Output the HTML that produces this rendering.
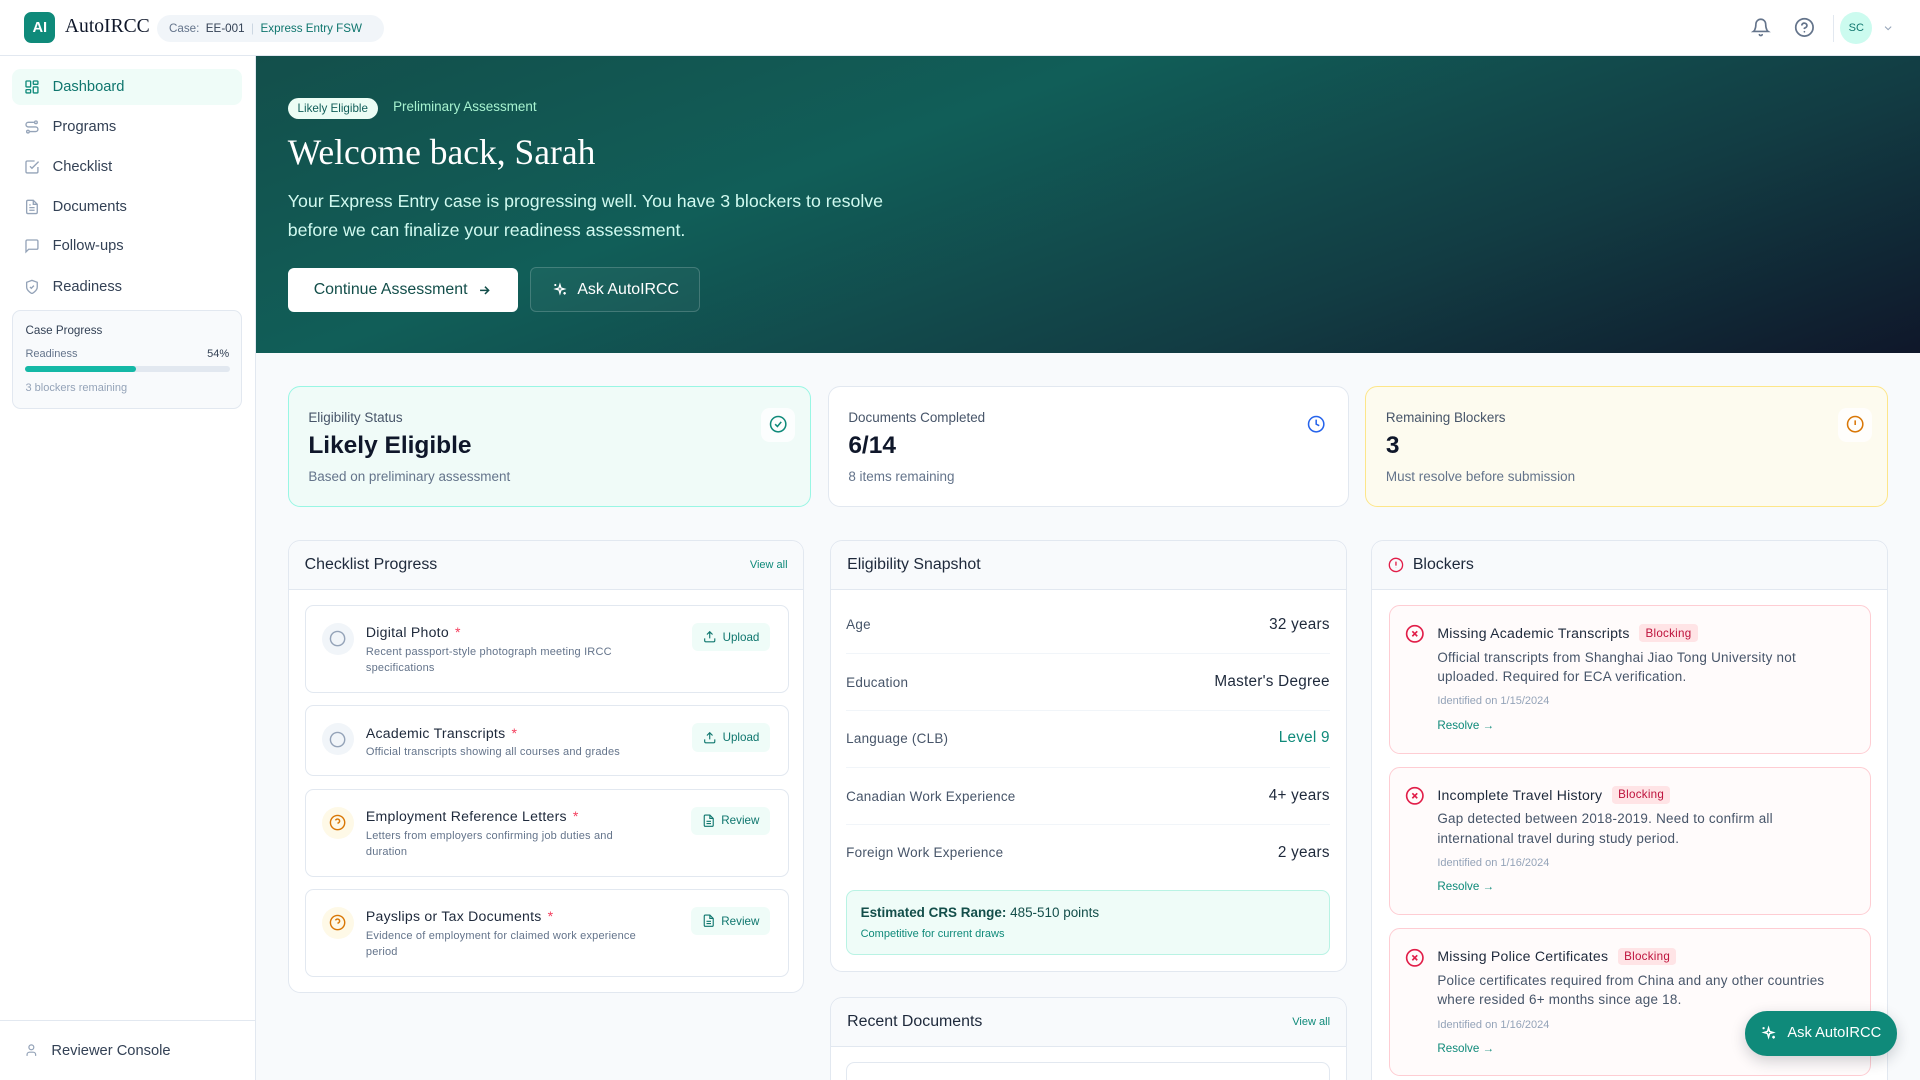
<!DOCTYPE html>
<html><head><meta charset="utf-8">
<style>
html{zoom:1.2245;overflow:hidden;height:882px;width:1568px}
*{box-sizing:border-box;margin:0;padding:0}
body{width:1568px;height:882px;overflow:hidden;position:relative;background:#f8fafc;font-family:"Liberation Sans",sans-serif;color:#0f172a}
.a{position:absolute}
svg{display:block}
.hdr{left:0;top:0;width:1568px;height:46px;background:#fff;border-bottom:1px solid #e2e8f0}
.side{left:0;top:46px;width:209px;height:836px;background:#fff;border-right:1px solid #e2e8f0}
.nav{left:10px;width:188px;height:30px;display:flex;align-items:center;padding-left:10px;font-size:12px;color:#334155;border-radius:7px}
.nav svg{margin-right:10px}
.card{border:1px solid #e2e8f0;border-radius:10px;background:#fff}
.ph{height:40px;border-bottom:1px solid #e2e8f0;background:#f8fafc;border-radius:10px 10px 0 0;display:flex;align-items:center;justify-content:space-between;padding:0 13px;font-size:13px;color:#1e293b}
.ph span{font-size:9px;color:#0f8a7a}
.ci{left:249px;width:395px;border:1px solid #e2e8f0;border-radius:7px;background:#fff}
.ci .ic{position:absolute;left:13px;top:14px;width:26px;height:26px;border-radius:50%;display:flex;align-items:center;justify-content:center}
.ci .t{position:absolute;left:49px;top:15px;font-size:11.5px;color:#1e293b;letter-spacing:.2px}
.ci .t b{color:#f43f5e;font-weight:normal;margin-left:5px}
.ci .d{position:absolute;left:49px;top:32px;width:232px;font-size:9px;line-height:13px;color:#64748b;letter-spacing:.15px}
.ci .btn{position:absolute;right:14px;top:14px;height:23px;padding:0 9px;border-radius:5px;background:#effcf8;color:#0f766e;font-size:9.5px;display:flex;align-items:center;gap:5px}
.row{left:691px;width:395px;height:47px;display:flex;justify-content:space-between;align-items:center;font-size:11px;color:#475569;border-bottom:1px solid #f1f5f9;letter-spacing:.2px}
.row b{font-weight:normal;font-size:12.5px;color:#1e293b}
.bl{left:1134px;width:394px;border:1px solid #fecdd3;background:#fffbfb;border-radius:9px}
.bl .x{position:absolute;left:13px;top:15px}
.bl .t{position:absolute;left:39px;top:15px;font-size:11.5px;color:#1e293b;display:flex;align-items:center;gap:8px;letter-spacing:.2px}
.bl .t i{font-style:normal;font-size:9.5px;color:#be123c;background:#ffe4e6;padding:2px 5px;border-radius:3px}
.bl .d{position:absolute;left:39px;top:34px;width:300px;font-size:11px;line-height:16px;color:#475569;letter-spacing:.2px}
.bl .dt{position:absolute;left:39px;top:73px;font-size:9px;color:#94a3b8}
.bl .r{position:absolute;left:39px;top:92px;font-size:9.5px;color:#0f8a7a}
.stat{top:315px;height:99px;border-radius:10px;border:1px solid #e2e8f0;background:#fff}
.stat .l{position:absolute;left:16px;top:19px;font-size:11px;color:#475569}
.stat .v{position:absolute;left:16px;top:37px;font-size:20px;color:#0f172a;font-weight:bold}
.stat .s{position:absolute;left:16px;top:67px;font-size:11px;color:#64748b}
.stat .ib{position:absolute;right:12px;top:17px;width:28px;height:28px;border-radius:7px;background:rgba(255,255,255,.8);display:flex;align-items:center;justify-content:center}
</style></head><body>

<div class="a hdr"></div>
<div class="a" style="left:20px;top:10px;width:25px;height:25px;border-radius:6px;background:#0f8a7a;color:#fff;font-size:12px;font-weight:bold;display:flex;align-items:center;justify-content:center">AI</div>
<div class="a" style="left:53px;top:13px;font-family:'Liberation Serif',serif;font-size:16px;color:#0f172a">AutoIRCC</div>
<div class="a" style="left:128px;top:12px;width:186px;height:22px;border-radius:11px;background:#f1f5f9;font-size:9.5px;display:flex;align-items:center;padding-left:10px;color:#64748b;white-space:nowrap">Case:&nbsp;<span style="color:#334155">&nbsp;EE-001&nbsp;</span>&nbsp;<span style="color:#cbd5e1">|</span>&nbsp;&nbsp;<span style="color:#0f766e">Express Entry FSW</span></div>
<svg class="a" style="left:1430px;top:14px" width="16" height="17" viewBox="0 0 24 24" fill="none" stroke="#64748b" stroke-width="2" stroke-linecap="round"><path d="M6 8a6 6 0 0112 0c0 7 3 9 3 9H3s3-2 3-9M10.3 21a1.9 1.9 0 003.4 0"/></svg>
<svg class="a" style="left:1465px;top:14px" width="17" height="17" viewBox="0 0 24 24" fill="none" stroke="#64748b" stroke-width="2" stroke-linecap="round"><circle cx="12" cy="12" r="10"/><path d="M9.1 9a3 3 0 015.8 1c0 2-3 3-3 3M12 17h.01"/></svg>
<div class="a" style="left:1497px;top:12px;width:1px;height:22px;background:#e2e8f0"></div>
<div class="a" style="left:1503px;top:10px;width:26px;height:26px;border-radius:50%;background:#ccfbef;color:#0f766e;font-size:9px;display:flex;align-items:center;justify-content:center">SC</div>
<svg class="a" style="left:1537px;top:18px" width="10" height="10" viewBox="0 0 24 24" fill="none" stroke="#94a3b8" stroke-width="2"><path d="M6 9l6 6 6-6"/></svg>

<div class="a side"></div>
<div class="a nav" style="top:56px;background:#effcf8;color:#0f766e"><svg width="13" height="13" viewBox="0 0 24 24" fill="none" stroke="#0f8a7a" stroke-width="2"><rect x="3" y="3" width="7" height="9" rx="1"/><rect x="14" y="3" width="7" height="5" rx="1"/><rect x="14" y="12" width="7" height="9" rx="1"/><rect x="3" y="16" width="7" height="5" rx="1"/></svg>Dashboard</div>
<div class="a nav" style="top:89px"><svg width="13" height="13" viewBox="0 0 24 24" fill="none" stroke="#94a3b8" stroke-width="2"><circle cx="6" cy="19" r="2"/><circle cx="18" cy="5" r="2"/><path d="M9 19h8.5a3.5 3.5 0 000-7h-11a3.5 3.5 0 010-7H15"/></svg>Programs</div>
<div class="a nav" style="top:121px"><svg width="13" height="13" viewBox="0 0 24 24" fill="none" stroke="#94a3b8" stroke-width="2"><path d="M9 11l3 3L22 4"/><path d="M21 12v7a2 2 0 01-2 2H5a2 2 0 01-2-2V5a2 2 0 012-2h11"/></svg>Checklist</div>
<div class="a nav" style="top:154px"><svg width="13" height="13" viewBox="0 0 24 24" fill="none" stroke="#94a3b8" stroke-width="2"><path d="M14 2H6a2 2 0 00-2 2v16a2 2 0 002 2h12a2 2 0 002-2V8z"/><path d="M14 2v6h6M16 13H8M16 17H8M10 9H8"/></svg>Documents</div>
<div class="a nav" style="top:186px"><svg width="13" height="13" viewBox="0 0 24 24" fill="none" stroke="#94a3b8" stroke-width="2"><path d="M21 15a2 2 0 01-2 2H7l-4 4V5a2 2 0 012-2h14a2 2 0 012 2z"/></svg>Follow-ups</div>
<div class="a nav" style="top:219px"><svg width="13" height="13" viewBox="0 0 24 24" fill="none" stroke="#94a3b8" stroke-width="2"><path d="M12 22s8-4 8-10V5l-8-3-8 3v7c0 6 8 10 8 10z"/><path d="M9 12l2 2 4-4"/></svg>Readiness</div>
<div class="a" style="left:10px;top:253px;width:188px;height:81px;border:1px solid #e2e8f0;border-radius:7px;background:#f8fafc">
 <div class="a" style="left:10px;top:11px;font-size:9.5px;color:#334155">Case Progress</div>
 <div class="a" style="left:10px;top:30px;font-size:9px;color:#64748b">Readiness</div>
 <div class="a" style="right:10px;top:30px;font-size:9px;color:#334155">54%</div>
 <div class="a" style="left:10px;top:45px;width:167px;height:5px;border-radius:3px;background:#e2e8f0"><div style="width:54%;height:5px;border-radius:3px;background:#14b8a6"></div></div>
 <div class="a" style="left:10px;top:58px;font-size:9px;color:#94a3b8">3 blockers remaining</div>
</div>
<div class="a" style="left:0;top:833px;width:208px;height:1px;background:#e2e8f0"></div>
<div class="a nav" style="top:843px"><svg width="12" height="12" viewBox="0 0 24 24" fill="none" stroke="#94a3b8" stroke-width="2"><circle cx="12" cy="7" r="4"/><path d="M5 21v-2a4 4 0 014-4h6a4 4 0 014 4v2"/></svg>Reviewer Console</div>

<div class="a" style="left:209px;top:46px;width:1359px;height:242px;background:linear-gradient(160deg,#134f4b 0%,#115e58 35%,#123c43 70%,#0f172a 100%)"></div>
<div class="a" style="left:235px;top:80px;height:17px;padding:0 8px;border-radius:9px;background:#ecfdf5;color:#115e59;font-size:9.5px;display:flex;align-items:center">Likely Eligible</div>
<div class="a" style="left:321px;top:81px;font-size:11px;color:#a7f3d0">Preliminary Assessment</div>
<div class="a" style="left:235px;top:107px;font-family:'Liberation Serif',serif;font-size:29px;color:#fff">Welcome back, Sarah</div>
<div class="a" style="left:235px;top:153px;width:515px;font-size:14.5px;line-height:23px;color:#d1faf0">Your Express Entry case is progressing well. You have 3 blockers to resolve before we can finalize your readiness assessment.</div>
<div class="a" style="left:235px;top:219px;width:188px;height:36px;border-radius:5px;background:#fff;color:#134e4a;font-size:13px;display:flex;align-items:center;justify-content:center;gap:8px">Continue Assessment <svg width="12" height="12" viewBox="0 0 24 24" fill="none" stroke="#134e4a" stroke-width="2.5"><path d="M5 12h14M13 6l6 6-6 6"/></svg></div>
<div class="a" style="left:433px;top:218px;width:139px;height:37px;border-radius:5px;border:1px solid rgba(255,255,255,.18);background:rgba(255,255,255,.04);color:#fff;font-size:13px;display:flex;align-items:center;justify-content:center;gap:8px"><svg width="13" height="13" viewBox="0 0 24 24" fill="none" stroke="#fff" stroke-width="2"><path d="M12 4l1.5 5 5 1.5-5 1.5-1.5 5-1.5-5-5-1.5 5-1.5zM19 15v4M17 17h4M5 3v3M3.5 4.5h3"/></svg>Ask AutoIRCC</div>

<div class="a stat" style="left:235px;width:427px;background:#f0fbf8;border-color:#99f6e4"><div class="l">Eligibility Status</div><div class="v">Likely Eligible</div><div class="s">Based on preliminary assessment</div><div class="ib"><svg width="15" height="15" viewBox="0 0 24 24" fill="none" stroke="#0f8a7a" stroke-width="2"><circle cx="12" cy="12" r="10"/><path d="M8 12l3 3 5-6"/></svg></div></div>
<div class="a stat" style="left:676px;width:426px"><div class="l">Documents Completed</div><div class="v">6/14</div><div class="s">8 items remaining</div><div class="ib"><svg width="15" height="15" viewBox="0 0 24 24" fill="none" stroke="#2563eb" stroke-width="2"><circle cx="12" cy="12" r="10"/><path d="M12 6v6l4 2"/></svg></div></div>
<div class="a stat" style="left:1115px;width:427px;background:#fdfbef;border-color:#fde68a"><div class="l">Remaining Blockers</div><div class="v">3</div><div class="s">Must resolve before submission</div><div class="ib"><svg width="15" height="15" viewBox="0 0 24 24" fill="none" stroke="#d97706" stroke-width="2"><circle cx="12" cy="12" r="10"/><path d="M12 7v6M12 16.5v.01"/></svg></div></div>

<div class="a card" style="left:235px;top:441px;width:422px;height:370px"><div class="ph">Checklist Progress<span>View all</span></div></div>
<div class="a ci" style="top:494px;height:72px"><div class="ic" style="background:#f1f5f9"><svg width="14" height="14" viewBox="0 0 24 24" fill="none" stroke="#94a3b8" stroke-width="2"><circle cx="12" cy="12" r="10"/></svg></div><div class="t">Digital Photo<b>*</b></div><div class="d">Recent passport-style photograph meeting IRCC specifications</div><div class="btn"><svg width="11" height="11" viewBox="0 0 24 24" fill="none" stroke="#0f766e" stroke-width="2"><path d="M21 15v4a2 2 0 01-2 2H5a2 2 0 01-2-2v-4M17 8l-5-5-5 5M12 3v12"/></svg>Upload</div></div>
<div class="a ci" style="top:576px;height:58px"><div class="ic" style="background:#f1f5f9"><svg width="14" height="14" viewBox="0 0 24 24" fill="none" stroke="#94a3b8" stroke-width="2"><circle cx="12" cy="12" r="10"/></svg></div><div class="t">Academic Transcripts<b>*</b></div><div class="d" style="width:300px">Official transcripts showing all courses and grades</div><div class="btn"><svg width="11" height="11" viewBox="0 0 24 24" fill="none" stroke="#0f766e" stroke-width="2"><path d="M21 15v4a2 2 0 01-2 2H5a2 2 0 01-2-2v-4M17 8l-5-5-5 5M12 3v12"/></svg>Upload</div></div>
<div class="a ci" style="top:644px;height:72px"><div class="ic" style="background:#fef9e7"><svg width="14" height="14" viewBox="0 0 24 24" fill="none" stroke="#d97706" stroke-width="2"><circle cx="12" cy="12" r="10"/><path d="M9.1 9a3 3 0 015.8 1c0 2-3 3-3 3M12 17h.01"/></svg></div><div class="t">Employment Reference Letters<b>*</b></div><div class="d" style="width:215px">Letters from employers confirming job duties and duration</div><div class="btn"><svg width="11" height="11" viewBox="0 0 24 24" fill="none" stroke="#0f766e" stroke-width="2"><path d="M14 2H6a2 2 0 00-2 2v16a2 2 0 002 2h12a2 2 0 002-2V8z"/><path d="M14 2v6h6M16 13H8M16 17H8"/></svg>Review</div></div>
<div class="a ci" style="top:726px;height:72px"><div class="ic" style="background:#fef9e7"><svg width="14" height="14" viewBox="0 0 24 24" fill="none" stroke="#d97706" stroke-width="2"><circle cx="12" cy="12" r="10"/><path d="M9.1 9a3 3 0 015.8 1c0 2-3 3-3 3M12 17h.01"/></svg></div><div class="t">Payslips or Tax Documents<b>*</b></div><div class="d" style="width:225px">Evidence of employment for claimed work experience period</div><div class="btn"><svg width="11" height="11" viewBox="0 0 24 24" fill="none" stroke="#0f766e" stroke-width="2"><path d="M14 2H6a2 2 0 00-2 2v16a2 2 0 002 2h12a2 2 0 002-2V8z"/><path d="M14 2v6h6M16 13H8M16 17H8"/></svg>Review</div></div>

<div class="a card" style="left:678px;top:441px;width:422px;height:353px"><div class="ph">Eligibility Snapshot</div></div>
<div class="a row" style="top:487px">Age<b>32 years</b></div>
<div class="a row" style="top:534px">Education<b>Master's Degree</b></div>
<div class="a row" style="top:580px">Language (CLB)<b style="color:#0f8a7a">Level 9</b></div>
<div class="a row" style="top:627px">Canadian Work Experience<b>4+ years</b></div>
<div class="a row" style="top:673px;border:none">Foreign Work Experience<b>2 years</b></div>
<div class="a" style="left:691px;top:727px;width:395px;height:53px;border:1px solid #b9f3e4;border-radius:7px;background:#effcf8">
 <div class="a" style="left:11px;top:11px;font-size:11px;color:#134e4a"><b>Estimated CRS Range:</b> 485-510 points</div>
 <div class="a" style="left:11px;top:30px;font-size:9px;color:#0f8a7a">Competitive for current draws</div>
</div>
<div class="a card" style="left:678px;top:814px;width:422px;height:100px"><div class="ph" style="height:40px">Recent Documents<span>View all</span></div></div>
<div class="a" style="left:691px;top:867px;width:395px;height:40px;border:1px solid #e2e8f0;border-radius:7px;background:#fff"></div>

<div class="a card" style="left:1120px;top:441px;width:422px;height:460px"><div class="ph" style="justify-content:flex-start;gap:7px"><svg width="13" height="13" viewBox="0 0 24 24" fill="none" stroke="#e11d48" stroke-width="2"><circle cx="12" cy="12" r="10"/><path d="M12 7v6M12 16.5v.01"/></svg>Blockers</div></div>
<div class="a bl" style="top:494px;height:122px"><svg class="x" width="16" height="16" viewBox="0 0 24 24" fill="none" stroke="#e11d48" stroke-width="2"><circle cx="12" cy="12" r="10"/><path d="M15 9l-6 6M9 9l6 6"/></svg><div class="t">Missing Academic Transcripts<i>Blocking</i></div><div class="d" style="width:335px">Official transcripts from Shanghai Jiao Tong University not uploaded. Required for ECA verification.</div><div class="dt">Identified on 1/15/2024</div><div class="r">Resolve →</div></div>
<div class="a bl" style="top:626px;height:121px"><svg class="x" width="16" height="16" viewBox="0 0 24 24" fill="none" stroke="#e11d48" stroke-width="2"><circle cx="12" cy="12" r="10"/><path d="M15 9l-6 6M9 9l6 6"/></svg><div class="t">Incomplete Travel History<i>Blocking</i></div><div class="d" style="width:305px">Gap detected between 2018-2019. Need to confirm all international travel during study period.</div><div class="dt">Identified on 1/16/2024</div><div class="r">Resolve →</div></div>
<div class="a bl" style="top:758px;height:121px"><svg class="x" width="16" height="16" viewBox="0 0 24 24" fill="none" stroke="#e11d48" stroke-width="2"><circle cx="12" cy="12" r="10"/><path d="M15 9l-6 6M9 9l6 6"/></svg><div class="t">Missing Police Certificates<i>Blocking</i></div><div class="d" style="width:345px">Police certificates required from China and any other countries where resided 6+ months since age 18.</div><div class="dt">Identified on 1/16/2024</div><div class="r">Resolve →</div></div>

<div class="a" style="left:1425px;top:826px;width:124px;height:36px;border-radius:18px;background:#0f8a7a;color:#fff;font-size:12px;display:flex;align-items:center;justify-content:center;gap:8px;box-shadow:0 4px 12px rgba(15,23,42,.2)"><svg width="14" height="14" viewBox="0 0 24 24" fill="none" stroke="#fff" stroke-width="2"><path d="M12 4l1.5 5 5 1.5-5 1.5-1.5 5-1.5-5-5-1.5 5-1.5zM19 15v4M17 17h4M5 3v3M3.5 4.5h3"/></svg>Ask AutoIRCC</div>
</body></html>
